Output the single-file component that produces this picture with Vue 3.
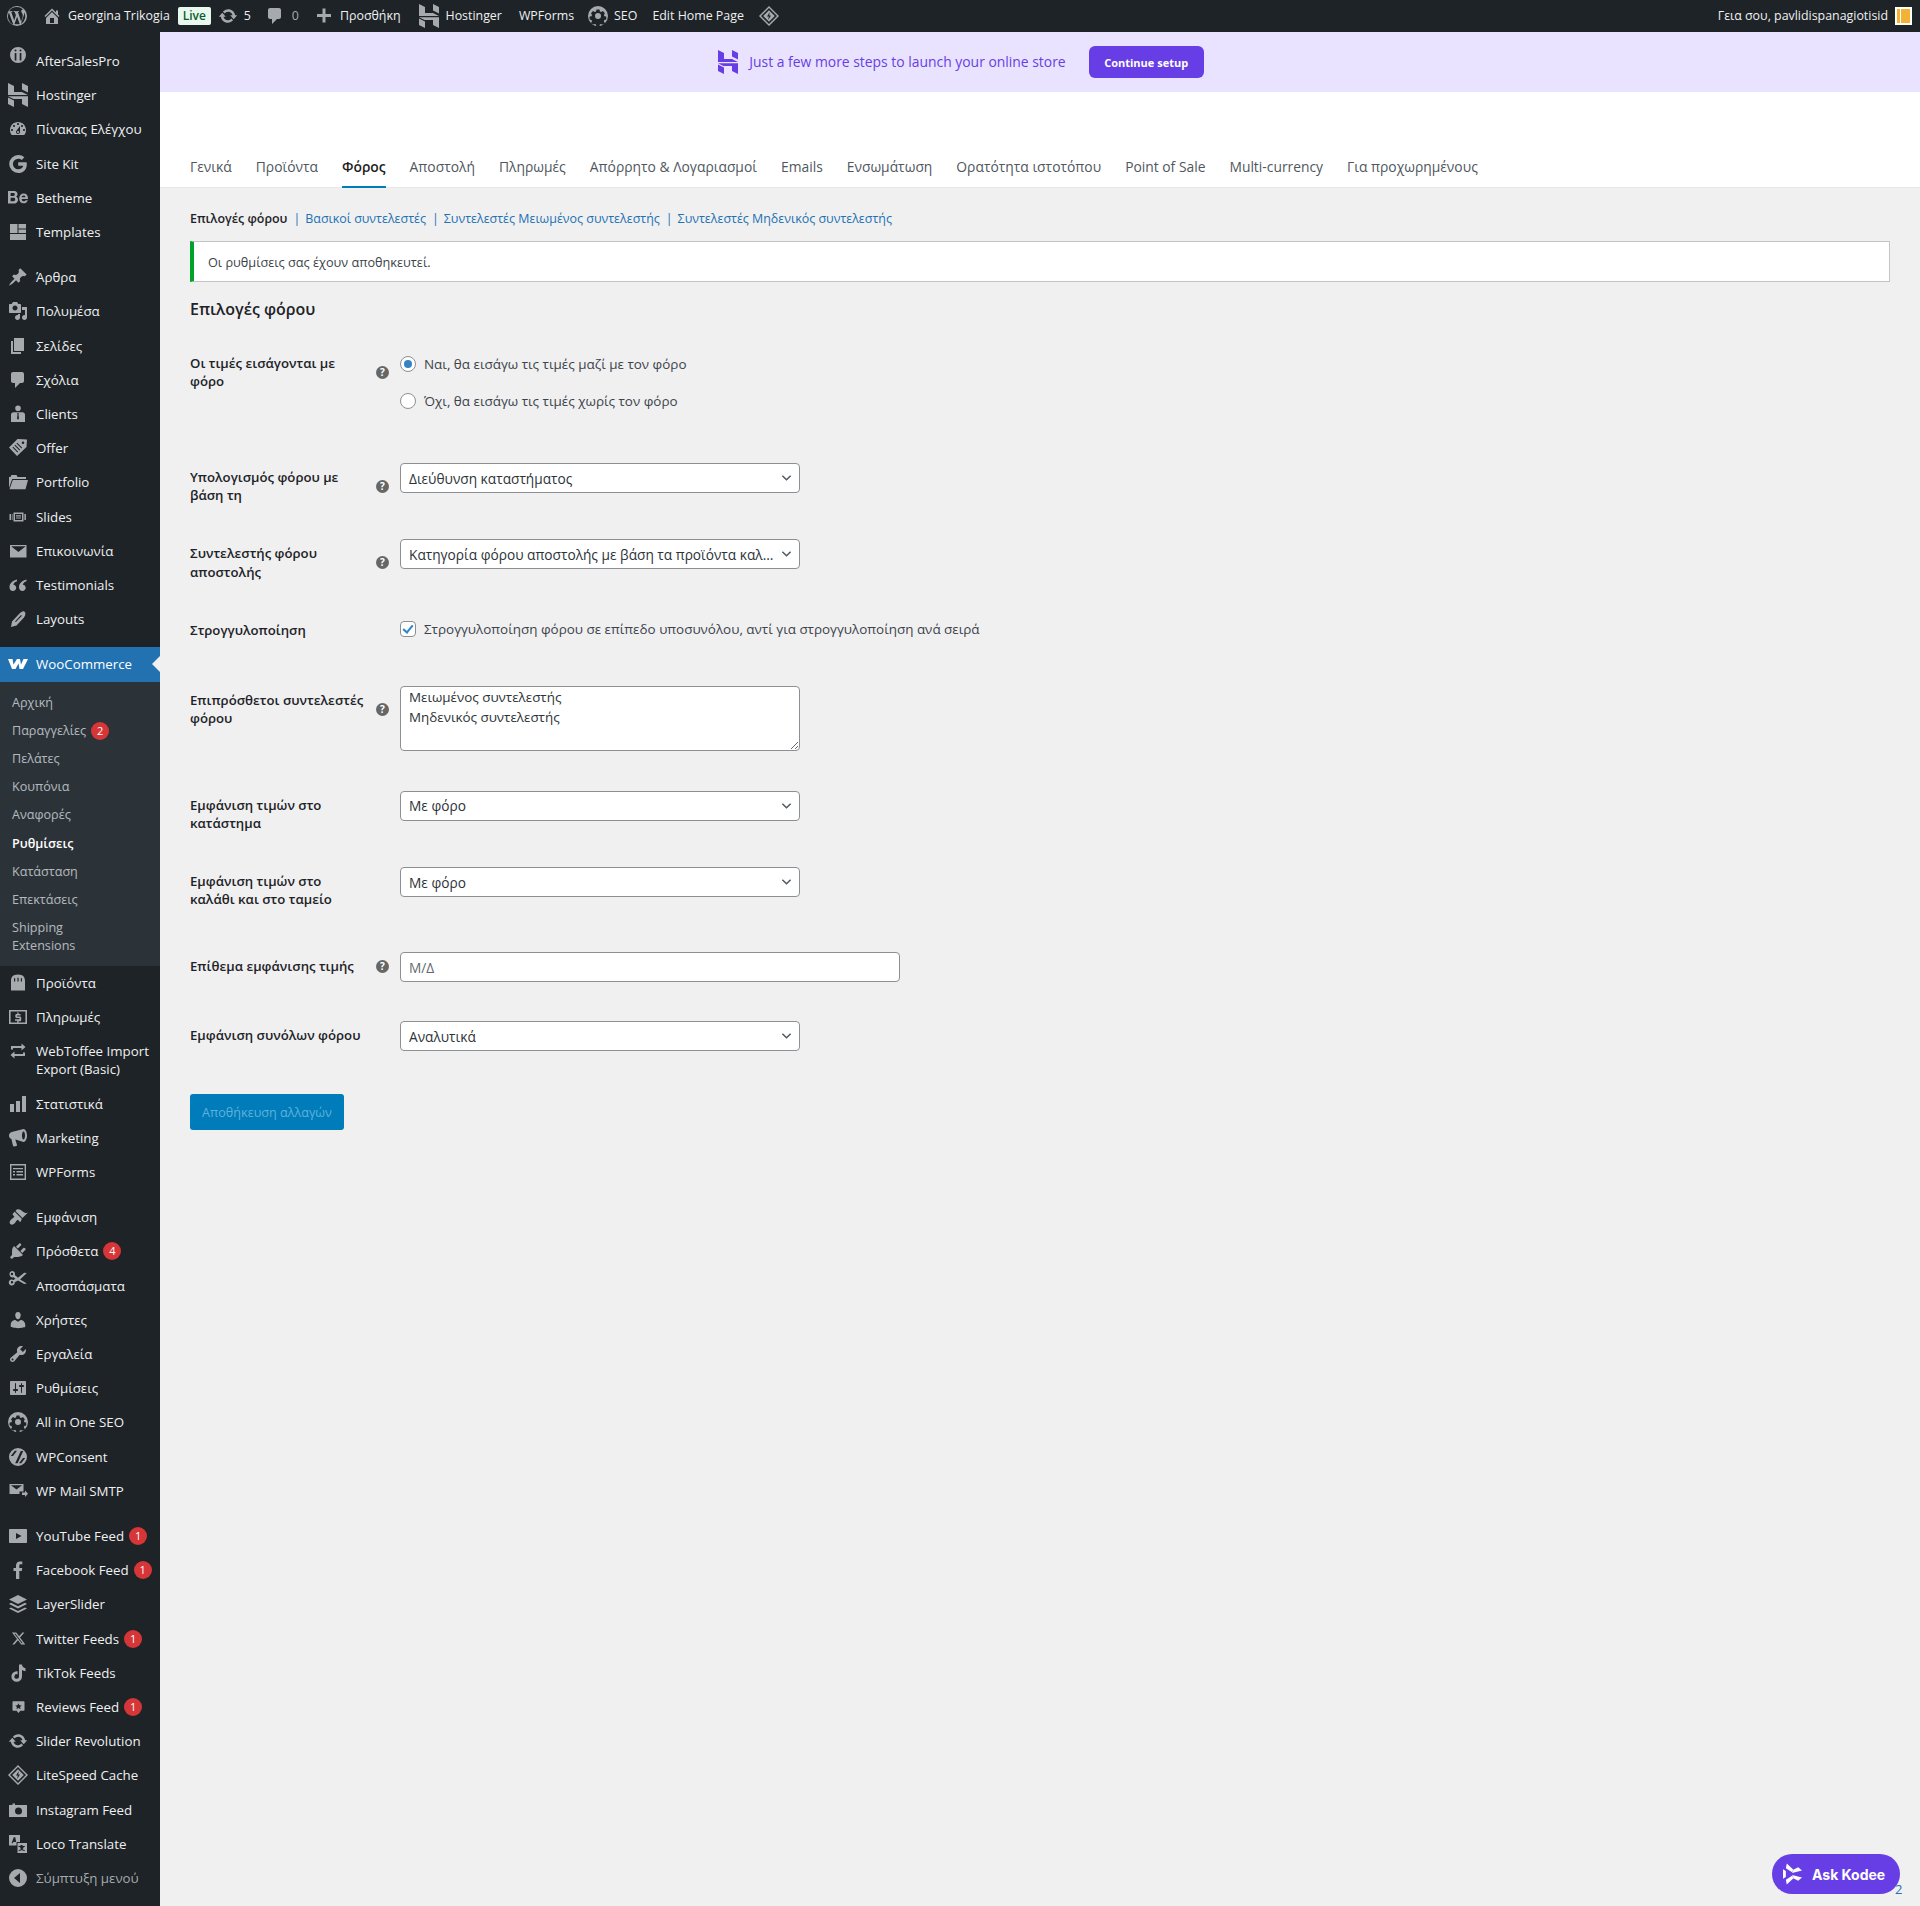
<template>
  <div class="page">
    <header class="adminbar">
      <div class="bar-left">
        <svg class="wp" viewBox="0 0 20 20"><path :d="icons.wp" /></svg>
        <svg class="bar-ico home" viewBox="0 0 20 20"><path :d="icons.home" /></svg>
        <span class="bar-txt site">Georgina Trikogia</span>
        <span class="live">Live</span>
        <svg class="bar-ico upd" viewBox="0 0 20 20"><path :d="icons.update" /></svg>
        <span class="bar-txt cnt">5</span>
        <svg class="bar-ico cmt" viewBox="0 0 20 20"><path :d="icons.comments" /></svg>
        <span class="bar-txt zero">0</span>
        <svg class="bar-ico plus" viewBox="0 0 20 20"><path :d="icons.plus" /></svg>
        <span class="bar-txt add">Προσθήκη</span>
        <svg class="bar-ico hst" viewBox="0 0 20 24"><path :d="icons.hostinger" /></svg>
        <span class="bar-txt host">Hostinger</span>
        <span class="bar-txt forms">WPForms</span>
        <svg class="bar-ico gear" viewBox="0 0 20 20"><path :d="icons.seo" fill-rule="evenodd" /></svg>
        <span class="bar-txt seo">SEO</span>
        <span class="bar-txt edit">Edit Home Page</span>
        <svg class="bar-ico dia" viewBox="0 0 20 20"><path :d="icons.litespeed" fill-rule="evenodd" /></svg>
      </div>
      <div class="bar-right">
        <span class="bar-txt">Γεια σου, pavlidispanagiotisid</span>
        <span class="avatar"><i></i><b></b></span>
      </div>
    </header>

    <div class="body">
      <aside class="menu">
        <template v-for="(m, i) in menu" :key="i">
          <div v-if="m.sep" class="sep"></div>
          <div v-else class="item" :class="{ current: m.current, dim: m.dim }">
            <span class="ico" :class="{ lift: m.lift, small: m.small }">
              <svg v-if="m.tall" class="tall" viewBox="0 0 20 24"><path :d="icons[m.icon]" /></svg>
              <svg v-else viewBox="0 0 20 20"><path :d="icons[m.icon]" fill-rule="evenodd" /></svg>
            </span>
            <span class="lbl">{{ m.label }}<em v-if="m.badge" class="badge">{{ m.badge }}</em></span>
          </div>
          <ul v-if="m.current" class="sub">
            <li v-for="s in sub" :key="s.label" :class="{ on: s.on }">
              {{ s.label }}<em v-if="s.badge" class="badge">{{ s.badge }}</em>
            </li>
          </ul>
        </template>
      </aside>

      <main class="main">
        <div class="banner">
          <svg class="ban-logo" viewBox="0 0 20 24"><path :d="icons.hostinger" /></svg>
          <span class="ban-txt">Just a few more steps to launch your online store</span>
          <button class="ban-btn">Continue setup</button>
        </div>

        <nav class="tabs">
          <a v-for="t in tabs" :key="t" :class="{ active: t === 'Φόρος' }">{{ t }}</a>
        </nav>

        <section class="content">
          <div class="subnav">
            <b>Επιλογές φόρου</b>
            <i>|</i><a>Βασικοί συντελεστές</a>
            <i>|</i><a>Συντελεστές Μειωμένος συντελεστής</a>
            <i>|</i><a>Συντελεστές Μηδενικός συντελεστής</a>
          </div>

          <div class="notice">Οι ρυθμίσεις σας έχουν αποθηκευτεί.</div>

          <h2>Επιλογές φόρου</h2>

          <div class="rows">
            <div class="row h-radio">
              <div class="th"><label>Οι τιμές εισάγονται με φόρο</label><span class="tip">?</span></div>
              <div class="td radios">
                <label class="opt"><input type="radio" name="inc" checked /> Ναι, θα εισάγω τις τιμές μαζί με τον φόρο</label>
                <label class="opt"><input type="radio" name="inc" /> Όχι, θα εισάγω τις τιμές χωρίς τον φόρο</label>
              </div>
            </div>

            <div class="row">
              <div class="th"><label>Υπολογισμός φόρου με βάση τη</label><span class="tip">?</span></div>
              <div class="td"><div class="sel"><select><option>Διεύθυνση καταστήματος</option></select><svg viewBox="0 0 12 8"><path d="M1.5 1.5 6 6l4.5-4.5" /></svg></div></div>
            </div>

            <div class="row">
              <div class="th"><label>Συντελεστής φόρου αποστολής</label><span class="tip">?</span></div>
              <div class="td"><div class="sel"><select><option>Κατηγορία φόρου αποστολής με βάση τα προϊόντα καλαθιού</option></select><svg viewBox="0 0 12 8"><path d="M1.5 1.5 6 6l4.5-4.5" /></svg></div></div>
            </div>

            <div class="row h-round">
              <div class="th"><label>Στρογγυλοποίηση</label></div>
              <div class="td check-cell">
                <label class="opt"><input type="checkbox" checked /> Στρογγυλοποίηση φόρου σε επίπεδο υποσυνόλου, αντί για στρογγυλοποίηση ανά σειρά</label>
              </div>
            </div>

            <div class="row h-area">
              <div class="th"><label>Επιπρόσθετοι συντελεστές φόρου</label><span class="tip">?</span></div>
              <div class="td"><textarea v-model="rates"></textarea></div>
            </div>

            <div class="row">
              <div class="th"><label>Εμφάνιση τιμών στο κατάστημα</label></div>
              <div class="td"><div class="sel"><select><option>Με φόρο</option></select><svg viewBox="0 0 12 8"><path d="M1.5 1.5 6 6l4.5-4.5" /></svg></div></div>
            </div>

            <div class="row h-cart">
              <div class="th"><label>Εμφάνιση τιμών στο καλάθι και στο ταμείο</label></div>
              <div class="td"><div class="sel"><select><option>Με φόρο</option></select><svg viewBox="0 0 12 8"><path d="M1.5 1.5 6 6l4.5-4.5" /></svg></div></div>
            </div>

            <div class="row h-check">
              <div class="th"><label>Επίθεμα εμφάνισης τιμής</label><span class="tip">?</span></div>
              <div class="td"><input class="txt" type="text" placeholder="Μ/Δ" /></div>
            </div>

            <div class="row h-last">
              <div class="th"><label>Εμφάνιση συνόλων φόρου</label></div>
              <div class="td"><div class="sel"><select><option>Αναλυτικά</option></select><svg viewBox="0 0 12 8"><path d="M1.5 1.5 6 6l4.5-4.5" /></svg></div></div>
            </div>
          </div>

          <button class="save">Αποθήκευση αλλαγών</button>
        </section>
      </main>
    </div>

    <span class="tail">2</span>
    <button class="kodee">
      <svg viewBox="0 0 20 22"><path d="M0 6l3 1.800v6.400L0 16zM4 0l7 6.500-1 2.800-7-4.300zM4 22l7-6.500-1-2.800-7 4.300zM9.500 10l10.500-2.800-4-3.200-5.300 2.500zM9.500 12L20 14.800 16 18l-5.300-2.500z" /></svg>
      Ask Kodee
    </button>
  </div>
</template>

<script setup>
import { ref } from 'vue'

const rates = ref('Μειωμένος συντελεστής\nΜηδενικός συντελεστής')

const icons = {
  wp: 'M10 0a10 10 0 1 0 0 20 10 10 0 0 0 0-20zm0 1a9 9 0 0 1 6.1 2.4c-1-.1-1.9.7-1.9 1.7 0 .8.5 1.5.9 2.2.4.6.7 1.4.7 2.5 0 .8-.3 1.7-.7 2.9l-.9 3-3.3-9.8.9-.1c.4 0 .4-.7 0-.7l-2.5.1-2.4-.1c-.4 0-.5.7 0 .7l.8.1 1.2 3.4-1.7 5.2-2.9-8.6.9-.1c.4 0 .4-.7 0-.7l-2.5.1h-.6A9 9 0 0 1 10 1zM1.900 6.600l4.500 12.200A9 9 0 0 1 1.900 6.600zm8.200 4.200 2.500 6.900c.1.100.1.200.2.200a9 9 0 0 1-5.300.100zm7.100-4.700a9 9 0 0 1-3.300 11.900l2.700-7.900c.5-1.300.7-2.300.7-3.200 0-.3 0-.6-.1-.8z',
  home: 'M16 8.5l1.53 1.53-1.06 1.06L10 4.62l-6.47 6.47-1.06-1.06L10 2.5l4 4v-2h2v4zm-6-2.46l6 5.99V18H4v-5.97zM12 17v-5H8v5h4z',
  update: 'M10.2 3.28c3.53 0 6.43 2.61 6.92 6h2.08l-3.5 4-3.5-4h2.32c-.45-1.97-2.21-3.45-4.32-3.45-1.45 0-2.73.71-3.54 1.78L4.95 5.66C6.23 4.2 8.11 3.28 10.2 3.28zm-.4 13.44c-3.52 0-6.43-2.61-6.92-6H.8l3.5-4c1.17 1.33 2.33 2.67 3.5 4H5.48c.45 1.97 2.21 3.45 4.32 3.45 1.45 0 2.73-.71 3.54-1.78l1.71 1.95c-1.28 1.46-3.15 2.38-5.25 2.38z',
  comments: 'M5 2h9c1.1 0 2 .9 2 2v7c0 1.1-.9 2-2 2h-2l-5 5v-5H5c-1.1 0-2-.9-2-2V4c0-1.1.9-2 2-2z',
  plus: 'M17 8v3h-5.5v5.5h-3V11H3V8h5.5V2.5h3V8z',
  hostinger: 'M0 0l6 3v6h8l6 3H0zM14 0l6 3v6.6l-6-3zM0 14.4l6 3V24l-6-3zM0 13.2h20V24l-6-3v-5H5.5z',
  seo: 'M10 0a10 10 0 1 0 0 20 10 10 0 0 0 0-20zm-1.5 3.6h3l.4 1.9 1.3.6 1.7-1 2 2.1-1 1.7.5 1.3 1.9.4v3l-1.9.4-.6 1.3 1 1.7-2 2-1.7-1-1.3.5-.4 1.9h-3l-.4-1.9-1.3-.5-1.7 1-2-2 1-1.7-.5-1.3-1.9-.4v-3l1.9-.4.5-1.3-1-1.7 2-2.1 1.7 1 1.3-.6zM10 7a3 3 0 1 0 0 6 3 3 0 0 0 0-6z',
  litespeed: 'M10 0l10 10-10 10L0 10zm0 2L2 10l8 8 8-8zm0 2.2L15.8 10 10 15.8 4.2 10zm.8 1.8L8 10.6h1.8l-.6 3.4 2.8-4.6h-1.8z',
  afp: 'M10 2a8 8 0 1 0 0 16 8 8 0 0 0 0-16zM7.500 4.500a1 1 0 1 1 0 2 1 1 0 0 1 0-2zm5 0a1 1 0 1 1 0 2 1 1 0 0 1 0-2zM6.700 8h1.700v7.500H6.700zm5 0h1.700v7.500h-1.700z',
  dash: 'M3.76 16h12.48c1.1-1.37 1.76-3.11 1.76-5 0-4.42-3.58-8-8-8s-8 3.58-8 8c0 1.89.66 3.63 1.76 5zM10 4c.55 0 1 .45 1 1s-.45 1-1 1-1-.45-1-1 .45-1 1-1zM6 6c.55 0 1 .45 1 1s-.45 1-1 1-1-.45-1-1 .45-1 1-1zm8 0c.55 0 1 .45 1 1s-.45 1-1 1-1-.45-1-1 .45-1 1-1zm-5.37 5.55L12 7v6c0 1.1-.9 2-2 2s-2-.9-2-2c0-.57.24-1.08.63-1.45zM4 10c.55 0 1 .45 1 1s-.45 1-1 1-1-.45-1-1 .45-1 1-1zm12 0c.55 0 1 .45 1 1s-.45 1-1 1-1-.45-1-1 .45-1 1-1zm-5 3c0-.55-.45-1-1-1s-1 .45-1 1 .45 1 1 1 1-.45 1-1z',
  gkit: 'M10.2 8.2v3.6h5c-.5 2.2-2.3 3.5-5 3.5a5.3 5.3 0 0 1 0-10.6c1.4 0 2.6.5 3.5 1.3l2.7-2.7A9 9 0 0 0 10.2 1a9 9 0 1 0 0 18c5 0 8.6-3.5 8.6-8.6 0-.8-.1-1.5-.2-2.2z',
  be: 'M0 3h5.7c1.3 0 3.8.4 3.8 3.2 0 1.3-.8 2.1-1.6 2.6 1.2.3 2.1 1.3 2.1 2.9 0 3-2.6 3.8-4.1 3.8H0zm2.6 2.1v2.8h2.7c.8 0 1.5-.3 1.5-1.4 0-1-.7-1.4-1.5-1.4zm0 4.7v3.4h2.9c1 0 1.7-.5 1.7-1.7 0-1.3-.7-1.7-1.7-1.7zM15.7 5.6c3 0 4.4 2.3 4.3 5.4h-6.3c0 1.5.9 2.3 2.1 2.3.9 0 1.6-.4 1.9-1.1h2.1c-.6 2.1-2.1 3.1-4.1 3.1-2.8 0-4.5-1.9-4.5-4.9 0-2.7 1.8-4.8 4.5-4.8zm1.8 3.7c-.1-1.2-.8-1.8-1.9-1.8s-1.8.8-1.9 1.8z',
  tpl: 'M2 2h7.500v9H2zM10.500 2H18v4.500h-7.500zM10.500 7.500H18V11h-7.500zM2 12h16v6H2z',
  pin: 'M10.44 3.02l1.82-1.82 6.36 6.35-1.83 1.82c-1.05-.68-2.48-.57-3.41.36l-.75.75c-.92.93-1.04 2.35-.35 3.41l-1.83 1.82-2.41-2.41-2.8 2.79c-.42.42-3.38 2.71-3.8 2.29s1.86-3.39 2.28-3.81l2.79-2.79L4.1 9.36l1.83-1.82c1.05.69 2.48.57 3.4-.36l.75-.75c.93-.92 1.05-2.35.36-3.41z',
  media: 'M13 11V4c0-.55-.45-1-1-1h-1.67L9 1H5L3.67 3H2c-.55 0-1 .45-1 1v7c0 .55.45 1 1 1h10c.55 0 1-.45 1-1zM7 4.5c1.38 0 2.5 1.12 2.5 2.5S8.38 9.5 7 9.5 4.5 8.38 4.5 7 5.62 4.5 7 4.5zM14 6h5v10.5c0 1.38-1.12 2.5-2.5 2.5S14 17.88 14 16.5s1.12-2.5 2.5-2.5c.17 0 .34.02.5.05V9h-3V6zm-4 8.05V13h2v3.5c0 1.38-1.12 2.5-2.5 2.5S7 17.88 7 16.5 8.12 14 9.5 14c.17 0 .34.02.5.05z',
  page: 'M6 15V2h10v13H6zm-1 1h8v2H3V5h2v11z',
  client: 'M10 1.500a2.800 2.800 0 1 1 0 5.600 2.800 2.800 0 0 1 0-5.600zM5.500 8.200h9c1.400 0 2.500 1.100 2.500 2.500V18H3v-7.300c0-1.400 1.100-2.500 2.500-2.500zM9.200 9l.3 1.500-.5 4 1 1.200 1-1.200-.5-4 .3-1.500z',
  offer: 'M9.500 1 1 9.500 9 18 18.500 9 19 1.500zM15 3.400a1.300 1.300 0 1 1 0 2.600 1.300 1.300 0 0 1 0-2.600zM8.500 5.500l.7-.7 5 5-.7.7zm-2 2 .7-.7 5 5-.7.7zm-2 2 .7-.7 5 5-.7.7z',
  folder: 'M1 16V5h1.500L3.500 3h5l1 2h8.500v2H4.200zM4.800 8H20l-2.500 9.200H1.500z',
  slides: 'M5.500 5.500h10v9h-10zm1.500 1.500v6h7V7zm1 1.200h5v1.200H8zm0 2.200h5v1.200H8zM1.500 7H3v6H1.500zm2.300 0h.7v6h-.7zm12.600 0h1.500v6h-1.500z',
  mail: 'M2 4h16.500v12.500H2zm1.400 1.500 7 5.500 7-5.500v-.2H3.400z',
  quote: 'M9 4.500C5 5.500 1.500 8 1.500 12.200c0 2.300 1.500 3.800 3.400 3.800s3.300-1.400 3.300-3.200c0-1.700-1.100-3-2.800-3.100.3-1.600 1.700-2.900 3.600-3.500zm9.500 0c-4 1-7.500 3.500-7.500 7.700 0 2.300 1.500 3.800 3.400 3.800s3.300-1.400 3.300-3.200c0-1.700-1.100-3-2.800-3.100.3-1.600 1.700-2.900 3.600-3.500z',
  pencil: 'M14.500 2.500c1.300-.4 2.500.1 2.800 1.500.3 1.400-.3 3-1.300 4.500L8.500 16.500 3 18l1-5.500 7.500-8c1-.9 2-1.600 3-2zM13 6l-6 6.500.9.600 6-6.400z',
  woo: 'M0 5h4.500l1 5.500L9 5h3l1 5.500L15.500 5H20l-5 10h-3.500l-1-5.500L7.500 15H4z',
  bag: 'M3 8c0-3.600 1.800-6.400 7-6.400S17 4.400 17 8v9.500H3zM6 8.500h1.200V5.500c0-.8-1.200-.8-1.200 0zm3.400 0h1.200V5c0-.8-1.200-.8-1.200 0zm3.400 0H14V5.500c0-.8-1.200-.8-1.200 0z',
  pay: 'M1 3h18v14H1zm1.600 1.600v10.800h14.800V4.600zm6.600 1h1.400V7h2v1.500H9v1.100h2.800c.9 0 1.400.6 1.400 1.400v1.900c0 .8-.5 1.400-1.400 1.400h-1.200v1.200H9.200V13.700H7v-1.500h4.500V11H8.700c-.9 0-1.400-.6-1.400-1.400V8.400C7.300 7.600 7.800 7 8.700 7h.5z',
  swap: 'M3 8.500V5h10.500V2.500l4 3.500-4 3.500V7H5v1.500zm14 3V15H6.500v2.500l-4-3.500 4-3.500V13H15v-1.500z',
  bars: 'M18 18V2h-4v16h4zm-6 0V7H8v11h4zm-6 0v-8H2v8h4z',
  mega: 'M15.500 1c2 0 3.500 3 3.500 6.500S17.500 14 15.500 14l-8-2.500-.2.100 1.700 5.400c.1.500-.2.900-.7 1l-2.300.4c-.4.100-.8-.2-1-.6L3.400 11C2 10.800 1 9.300 1 7.500S2.200 4.200 3.800 4zm0 2.500c-.9 0-1.500 1.800-1.500 4s.6 4 1.500 4 1.500-1.800 1.500-4-.6-4-1.500-4z',
  wpf: 'M2 2h16v16H2zm1.400 1.400v13.200h13.200V3.400zM5 6h10v1.200H5zM5 9h2v1.500H5zm3.500 0H15v1.500H8.500zM5 12h2v1.500H5zm3.500 0H15v1.500H8.500z',
  brush: 'M14.480 11.060L7.410 3.990l1.500-1.500c.5-.56 2.300-.47 3.510.32 1.210.8 1.430 1.280 2.910 2.100 1.180.64 2.450 1.260 4.450.85zm-.71.71L6.700 4.700 4.930 6.470c-.39.39-.39 1.020 0 1.410l1.060 1.060c.39.39.39 1.030 0 1.420-.6.6-1.430 1.110-2.210 1.690-.35.26-.7.530-1.010.84-1.430 1.420-1.430 3.200-.47 4.160s2.730.96 4.160-.47c.31-.31.580-.66.840-1.010.58-.78 1.090-1.610 1.690-2.210.39-.39 1.030-.39 1.420 0l1.060 1.060c.39.39 1.020.39 1.410 0z',
  plug: 'M13.110 4.360L9.870 7.600 8 5.730l3.240-3.240c.35-.34 1.050-.2 1.560.32.52.51.66 1.210.31 1.550zm-8 1.770l.91-1.120 9.010 9.010-1.190.84c-.71.71-2.630 1.160-3.820 1.160H6.140L4.900 17.260c-.59.59-1.540.59-2.120 0-.59-.58-.59-1.530 0-2.120l1.240-1.240v-3.880c0-1.130.4-3.190 1.090-3.890zm7.260 3.970l3.240-3.240c.34-.35 1.040-.21 1.550.31.520.51.660 1.210.31 1.550l-3.240 3.250z',
  scissors: 'M4 1a3 3 0 0 1 2.800 4.100L10 7.700l6.200-5 2.600.3-6.700 6.600 6.700 3.800-2.600.6-6.200-3.600-3.200 1.900A3 3 0 1 1 5.500 10l1.900-1.300-1.900-1.400A3 3 0 1 1 4 1zm0 1.800a1.200 1.200 0 1 0 0 2.400 1.200 1.200 0 0 0 0-2.400zm0 8.200a1.200 1.200 0 1 0 0 2.400 1.200 1.200 0 0 0 0-2.400z',
  users: 'M10 9.250c-2.270 0-2.730-3.440-2.730-3.440C7 4.020 7.820 2 9.970 2c2.160 0 2.980 2.020 2.710 3.810 0 0-.41 3.440-2.680 3.440zm0 2.570L12.720 10c2.390 0 4.520 2.330 4.520 4.530v2.490s-3.650 1.130-7.240 1.130c-3.650 0-7.240-1.130-7.240-1.130v-2.490c0-2.250 1.940-4.480 4.470-4.480z',
  tools: 'M16.680 9.770c-1.340 1.340-3.300 1.670-4.950.99l-5.410 6.520c-.99.99-2.590.99-3.580 0s-.99-2.590 0-3.570l6.520-5.420c-.68-1.650-.35-3.610.99-4.950 1.280-1.280 3.120-1.620 4.720-1.060l-2.890 2.890 2.820 2.820 2.860-2.870c.53 1.580.18 3.390-1.080 4.650zM3.810 16.210c.4.39 1.040.39 1.430 0 .4-.4.4-1.040 0-1.430-.39-.4-1.030-.4-1.430 0-.39.39-.39 1.030 0 1.430z',
  settings: 'M18 16V4c0-.55-.45-1-1-1H3c-.55 0-1 .45-1 1v12c0 .55.45 1 1 1h14c.55 0 1-.45 1-1zM8 11h1c.55 0 1 .45 1 1s-.45 1-1 1H8v1.500c0 .28-.22.5-.5.5s-.5-.22-.5-.5V13H6c-.55 0-1-.45-1-1s.45-1 1-1h1V5.500c0-.28.22-.5.5-.5s.5.22.5.5V11zm5-2h-1c-.55 0-1-.45-1-1s.45-1 1-1h1V5.500c0-.28.22-.5.5-.5s.5.22.5.5V7h1c.55 0 1 .45 1 1s-.45 1-1 1h-1v5.500c0 .28-.22.5-.5.5s-.5-.22-.5-.5V9z',
  consent: 'M10 1a9 9 0 1 0 0 18 9 9 0 0 0 0-18zM2.800 9l4-5.200H9L5 9zm4.400 7.200L12.800 4h2.400L9.600 16.200zM11 16.200l4-5.200h2.200l-4 5.200z',
  smtp: 'M1.500 3h14v7.500l-4 .1v2.400h-10zm1.400 1.300 5.600 4.200 5.600-4.200v-.1H2.900zM14 11.500h3V9.500l3 3.300-3 3.200v-2h-3z',
  yt: 'M2 3h16c.6 0 1 .4 1 1v12c0 .6-.4 1-1 1H2c-.6 0-1-.4-1-1V4c0-.6.4-1 1-1zm6 4v6l5.500-3z',
  fb: 'M8 19v-8H5.500V8H8V5.800C8 3 9.600 1.500 12 1.500c1.200 0 2 .1 2.300.1v2.700h-1.500c-1.300 0-1.500.6-1.500 1.500V8h3l-.5 3h-2.500v8z',
  layers: 'M10 1l9 4.500L10 10 1 5.500zM3 8.800l7 3.500 7-3.500 2 1.100-9 4.600-9-4.600zm0 4.600 7 3.500 7-3.500 2 1.100-9 4.500-9-4.500z',
  x: 'M15.200 2h2.700l-5.900 6.800L19 18h-5.400l-4.300-5.600L4.400 18H1.700l6.300-7.200L1.300 2h5.600l3.900 5.100zm-1 14.400h1.500L6 3.500H4.400z',
  tiktok: 'M11 1.500h3c.2 2.100 1.500 3.500 3.500 3.700v3c-1.300 0-2.500-.4-3.500-1.100v6.400a5.300 5.300 0 1 1-5.300-5.300c.3 0 .6 0 .9.100v3.100a2.300 2.300 0 1 0 1.400 2.100z',
  reviews: 'M3 3h14c.6 0 1 .4 1 1v10.500c0 .6-.4 1-1 1h-4.500L10 18.500l-2.500-3H3c-.6 0-1-.4-1-1V4c0-.6.4-1 1-1zm7 2.500-1.300 2.800-3 .3 2.200 2-.6 3L10 12.100l2.700 1.500-.6-3 2.200-2-3-.3z',
  rev: 'M10.200 3.280c3.530 0 6.430 2.610 6.920 6h2.080l-3.500 4-3.500-4h2.320c-.45-1.970-2.210-3.450-4.320-3.450-1.450 0-2.730.71-3.540 1.780L4.950 5.660C6.230 4.200 8.110 3.280 10.200 3.280zm-.4 13.440c-3.520 0-6.430-2.610-6.920-6H.8l3.500-4c1.170 1.330 2.330 2.670 3.500 4H5.480c.45 1.970 2.210 3.450 4.320 3.450 1.450 0 2.730-.71 3.540-1.780l1.710 1.950c-1.280 1.460-3.150 2.380-5.250 2.380z',
  insta: 'M1 5h3.500V3.500H7V5h12v12H1zm9.500 2.500a3.500 3.500 0 1 0 0 7 3.500 3.500 0 0 0 0-7z',
  loco: 'M1 1h11v7H8.500v3.500H1zm4.700 2.200L3.600 9.200h1.300l.4-1.300h2.300L8 8V7L7.300 3.200zM9.500 9H19v10H9.500zm3 2v1h-2v1.100H12c.3 1 .6 1.700 1 2.200-.6.300-1.300.5-2.300.6v1c1.300-.1 2.200-.5 3-1 .8.500 1.700.9 3 1v-1c-1-.1-1.700-.3-2.200-.6.600-.6 1-1.400 1.300-2.200h1v-1.100h-2.300v-1z',
  collapse: 'M10 1a9 9 0 1 0 0 18 9 9 0 0 0 0-18zm2 4v10L6 10z'
}

const menu = [
  { label: 'AfterSalesPro', icon: 'afp', lift: true },
  { label: 'Hostinger', icon: 'hostinger', tall: true },
  { label: 'Πίνακας Ελέγχου', icon: 'dash' },
  { label: 'Site Kit', icon: 'gkit' },
  { label: 'Betheme', icon: 'be' },
  { label: 'Templates', icon: 'tpl' },
  { sep: true },
  { label: 'Άρθρα', icon: 'pin' },
  { label: 'Πολυμέσα', icon: 'media' },
  { label: 'Σελίδες', icon: 'page' },
  { label: 'Σχόλια', icon: 'comments' },
  { label: 'Clients', icon: 'client' },
  { label: 'Offer', icon: 'offer' },
  { label: 'Portfolio', icon: 'folder' },
  { label: 'Slides', icon: 'slides' },
  { label: 'Επικοινωνία', icon: 'mail' },
  { label: 'Testimonials', icon: 'quote' },
  { label: 'Layouts', icon: 'pencil' },
  { sep: true },
  { label: 'WooCommerce', icon: 'woo', current: true },
  { label: 'Προϊόντα', icon: 'bag' },
  { label: 'Πληρωμές', icon: 'pay' },
  { label: 'WebToffee Import Export (Basic)', icon: 'swap' },
  { label: 'Στατιστικά', icon: 'bars' },
  { label: 'Marketing', icon: 'mega' },
  { label: 'WPForms', icon: 'wpf' },
  { sep: true },
  { label: 'Εμφάνιση', icon: 'brush' },
  { label: 'Πρόσθετα', icon: 'plug', badge: 4 },
  { label: 'Αποσπάσματα', icon: 'scissors', lift: true },
  { label: 'Χρήστες', icon: 'users' },
  { label: 'Εργαλεία', icon: 'tools' },
  { label: 'Ρυθμίσεις', icon: 'settings' },
  { label: 'All in One SEO', icon: 'seo' },
  { label: 'WPConsent', icon: 'consent' },
  { label: 'WP Mail SMTP', icon: 'smtp' },
  { sep: true },
  { label: 'YouTube Feed', icon: 'yt', badge: 1 },
  { label: 'Facebook Feed', icon: 'fb', badge: 1 },
  { label: 'LayerSlider', icon: 'layers' },
  { label: 'Twitter Feeds', icon: 'x', badge: 1, small: true },
  { label: 'TikTok Feeds', icon: 'tiktok' },
  { label: 'Reviews Feed', icon: 'reviews', badge: 1, small: true },
  { label: 'Slider Revolution', icon: 'rev' },
  { label: 'LiteSpeed Cache', icon: 'litespeed' },
  { label: 'Instagram Feed', icon: 'insta' },
  { label: 'Loco Translate', icon: 'loco' },
  { label: 'Σύμπτυξη μενού', icon: 'collapse', dim: true }
]

const sub = [
  { label: 'Αρχική' },
  { label: 'Παραγγελίες', badge: 2 },
  { label: 'Πελάτες' },
  { label: 'Κουπόνια' },
  { label: 'Αναφορές' },
  { label: 'Ρυθμίσεις', on: true },
  { label: 'Κατάσταση' },
  { label: 'Επεκτάσεις' },
  { label: 'Shipping Extensions' }
]

const tabs = ['Γενικά', 'Προϊόντα', 'Φόρος', 'Αποστολή', 'Πληρωμές', 'Απόρρητο & Λογαριασμοί', 'Emails', 'Ενσωμάτωση', 'Ορατότητα ιστοτόπου', 'Point of Sale', 'Multi-currency', 'Για προχωρημένους']
</script>

<style>
html, body { margin: 0; background: #f0f0f1; }
</style>

<style scoped>
.page { position: relative; width: 1920px; min-height: 1906px; background: #f0f0f1; font-family: "Open Sans", "Noto Sans", sans-serif; font-size: 13px; line-height: 1.4; color: #3c434a; overflow: hidden; }

.adminbar { height: 32px; background: #1d2327; display: flex; justify-content: space-between; align-items: center; color: #f0f0f1; font-size: 12.4px; }
.bar-left, .bar-right { display: flex; align-items: center; height: 32px; }
.bar-txt { white-space: nowrap; }
.wp { width: 20px; height: 20px; margin-left: 7px; fill: #a7aaad; }
.bar-ico { fill: #a7aaad; flex: none; }
.home { width: 20px; height: 20px; margin-left: 15px; }
.site { margin-left: 6px; }
.live { margin-left: 8px; width: 33px; height: 18px; line-height: 18px; text-align: center; background: #e8f8ee; color: #0a5c2c; border-radius: 2px; font-size: 12px; font-weight: 600; }
.upd { width: 20px; height: 20px; margin-left: 7px; }
.cnt { margin-left: 6px; }
.cmt { width: 20px; height: 20px; margin-left: 14px; }
.zero { margin-left: 7px; color: #a7aaad; }
.plus { width: 20px; height: 20px; margin-left: 15px; }
.add { margin-left: 6px; }
.hst { width: 20px; height: 24px; margin-left: 18px; }
.host { margin-left: 7px; }
.forms { margin-left: 17px; }
.gear { width: 20px; height: 20px; margin-left: 14px; }
.seo { margin-left: 6px; }
.edit { margin-left: 15px; }
.dia { width: 20px; height: 20px; margin-left: 15px; }
.bar-right { padding-right: 8px; gap: 7px; }
.avatar { width: 17px; height: 18px; background: #fff; display: flex; gap: 1px; padding: 2px; box-sizing: border-box; }
.avatar i { width: 3px; background: #f2b233; }
.avatar b { flex: 1; background: #f2b233; }

.body { display: flex; align-items: stretch; min-height: 1874px; }
.menu { width: 160px; flex: none; background: #1d2327; padding: 12px 0; box-sizing: border-box; color: #f0f0f1; font-size: 13.3px; }
.sep { height: 11px; }
.item { position: relative; display: flex; align-items: flex-start; padding: 8px 0; line-height: 18.2px; }
.item .ico { width: 36px; height: 18px; flex: none; display: flex; justify-content: center; align-items: center; }
.ico svg { width: 20px; height: 20px; fill: #a7aaad; flex: none; }
.ico svg.tall { height: 24px; }
.ico.small svg { width: 15px; height: 15px; }
.ico.lift { transform: translateY(-6px); }
.lbl { flex: 1; padding-right: 8px; }
.item.dim { color: #a7aaad; }
.item.current { background: #2271b1; color: #fff; }
.item.current .ico svg { fill: #fff; }
.item.current::after { content: ""; position: absolute; right: 0; top: 9px; border: 8px solid transparent; border-right-color: #f0f0f1; border-left-width: 0; }
.badge { display: inline-block; min-width: 18px; height: 18px; line-height: 18px; margin-left: 5px; border-radius: 9px; background: #d63638; color: #fff; font-size: 11px; font-style: normal; text-align: center; vertical-align: top; }
.sub { list-style: none; margin: 0; padding: 7px 0 5px; background: #2c3338; color: rgba(240,246,252,0.7); font-size: 12.6px; line-height: 18.2px; }
.sub li { padding: 5px 36px 5px 12px; }
.sub li.on { color: #fff; font-weight: 600; }

.main { flex: 1; min-width: 0; }
.banner { height: 60px; background: #e9e3ff; display: flex; align-items: center; justify-content: center; padding-right: 158px; }
.ban-logo { width: 20px; height: 24px; fill: #673de6; }
.ban-txt { margin-left: 11px; color: #673de6; font-size: 13.9px; }
.ban-btn { margin-left: 23px; width: 115px; height: 32px; border: 0; border-radius: 6px; background: #673de6; color: #fff; font: 700 11px "Open Sans", sans-serif; }

.tabs { height: 96px; box-sizing: border-box; background: #fff; border-bottom: 1px solid #e8e8e8; padding-left: 30px; display: flex; align-items: flex-end; gap: 24px; }
.tabs a { height: 39px; box-sizing: border-box; font-size: 13.85px; font-weight: 500; color: #50575e; white-space: nowrap; position: relative; top: 1px; padding-top: 8px; }
.tabs a.active { color: #1e1e1e; font-weight: 600; border-bottom: 2px solid #007cba; }

.content { padding: 22px 30px 40px; }
.subnav { display: flex; align-items: center; white-space: nowrap; height: 18px; font-size: 12.45px; }
.subnav b { font-weight: 600; color: #1d2327; }
.subnav i { font-style: normal; color: #2271b1; margin: 0 5px 0 6px; }
.subnav a { color: #2271b1; }
.notice { margin-top: 13px; height: 41px; box-sizing: border-box; background: #fff; border: 1px solid #c3c4c7; border-left: 4px solid #00a32a; padding: 12px 14px 0; color: #3c434a; font-size: 12.7px; }
h2 { margin: 16px 0 14px; font-size: 16px; line-height: 22px; font-weight: 600; color: #1d2327; }

.row { display: flex; align-items: flex-start; }
.h-radio { height: 114px; }
.h-round { height: 70px; }
.h-check { height: 69px; }
.h-area { height: 105px; }
.h-cart { height: 85px; }
.h-last { height: 74px; }
.th { width: 210px; flex: none; padding: 20px 0; display: flex; align-items: center; }
.th label { width: 176px; padding-right: 9px; flex: none; font-weight: 600; color: #1d2327; font-size: 13.2px; line-height: 18.2px; }
.tip { width: 13px; height: 13px; margin-left: 1px; border-radius: 50%; background: #666; color: #fff; font-size: 10px; font-weight: 700; line-height: 13px; text-align: center; }
.td { padding: 15px 0; }
.radios { padding-top: 20px; display: flex; flex-direction: column; gap: 18px; }
.check-cell { padding-top: 19px; }
.opt { display: flex; align-items: center; gap: 8px; color: #3c434a; height: 18px; font-size: 13.45px; padding-top: 1px; }
.opt input { appearance: none; margin: -1px 0 0; width: 16px; height: 16px; box-sizing: border-box; border: 1px solid #8c8f94; background: #fff; position: relative; flex: none; }
.opt input[type="radio"] { border-radius: 50%; }
.opt input[type="radio"]:checked::before { content: ""; position: absolute; left: 3px; top: 3px; width: 8px; height: 8px; border-radius: 50%; background: #3582c4; }
.opt input[type="checkbox"] { border-radius: 4px; }
.opt input[type="checkbox"]:checked::before { content: ""; position: absolute; left: 4px; top: 1px; width: 4px; height: 8px; border: solid #3582c4; border-width: 0 2px 2px 0; transform: rotate(40deg); }
.sel { position: relative; width: 400px; height: 30px; }
.sel select { appearance: none; width: 100%; height: 30px; box-sizing: border-box; background: #fff; border: 1px solid #8c8f94; border-radius: 4px; padding: 0 24px 0 8px; font: 13.7px "Open Sans", sans-serif; color: #2c3338; text-overflow: ellipsis; }
.sel svg { position: absolute; right: 8px; top: 11px; width: 11px; height: 8px; fill: none; stroke: #50575e; stroke-width: 1.6; }
textarea { display: block; width: 400px; height: 65px; box-sizing: border-box; padding: 0 8px; border: 1px solid #8c8f94; border-radius: 4px; background: #fff; font: 13.4px/20px "Open Sans", sans-serif; color: #2c3338; resize: vertical; }
.txt { display: block; width: 500px; height: 30px; box-sizing: border-box; padding: 0 8px; border: 1px solid #8c8f94; border-radius: 4px; background: #fff; font: 13.7px "Open Sans", sans-serif; }
.txt::placeholder { color: #646970; }
.save { display: block; margin-top: 14px; width: 154px; height: 36px; border: 0; border-radius: 3px; background: #007cba; color: #5fb1dc; font: 12.6px "Open Sans", sans-serif; }

.kodee { position: absolute; left: 1772px; top: 1854px; width: 128px; height: 40px; border: 0; border-radius: 20px; background: #673de6; color: #fff; display: flex; align-items: center; gap: 10px; padding: 0 11px; font: 700 14px Inter, sans-serif; }
.kodee svg { width: 19px; height: 22px; fill: #fff; flex: none; }
.tail { position: absolute; left: 1895px; top: 1880px; font-size: 13px; color: #2271b1; }
</style>
